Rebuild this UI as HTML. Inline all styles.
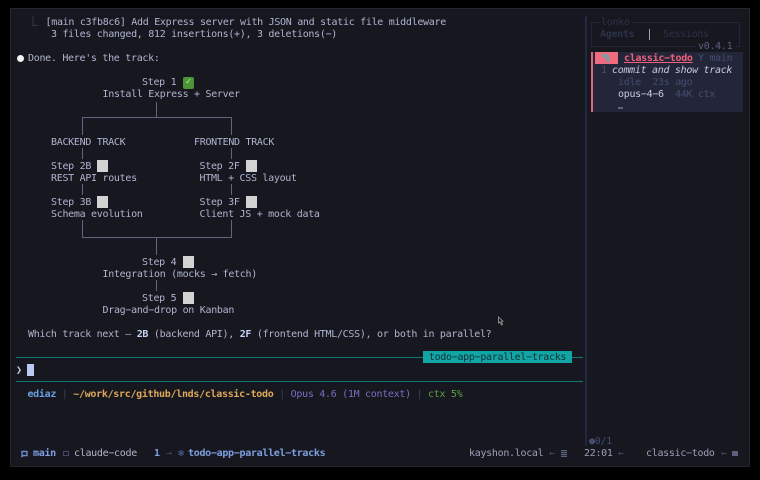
<!DOCTYPE html>
<html><head><meta charset="utf-8">
<style>
html,body{margin:0;padding:0;background:#000;}
body{width:760px;height:480px;overflow:hidden;position:relative;font-family:"DejaVu Sans Mono","Liberation Mono",monospace;font-size:10px;letter-spacing:-0.3px;line-height:12px;color:#aeb5d0;}
#all{position:absolute;left:0;top:0;width:760px;height:480px;filter:blur(0.3px);}
#win{position:absolute;left:11px;top:9px;width:738px;height:457px;background:#16171f;box-shadow:0 0 0 1px #25262d;}
.t{position:absolute;white-space:pre;height:12px;margin-top:1px;}
.b{position:absolute;background:#5f6580;}
.sq{position:absolute;width:11px;height:11.5px;background:#d2d2d2;}
b{color:#c5d0f5;font-weight:bold}
.d{color:#2d3348}
.m{color:#444d70}
</style></head><body>
<div id="all">
<div id="win"></div>

<div class="t" style="left:28px;top:16px;color:#5f6580">⎿</div>
<div class="t" style="left:45.5px;top:16px">[main c3fb8c6] Add Express server with JSON and static file middleware</div>
<div class="t" style="left:51px;top:28px">3 files changed, 812 insertions(+), 3 deletions(−)</div>
<div style="position:absolute;left:16.5px;top:54.5px;width:7px;height:7px;border-radius:50%;background:#f2f2f2"></div>
<div class="t" style="left:28px;top:52px">Done. Here's the track:</div>

<div class="t" style="left:142px;top:76px">Step 1</div>
<div style="position:absolute;left:182.5px;top:77px;width:11.5px;height:11.5px;border-radius:2px;background:#4a9636;color:#cfeebb;font-size:9px;line-height:11.5px;text-align:center">✓</div>
<div class="t" style="left:102.5px;top:88px">Install Express + Server</div>
<div class="t" style="left:51px;top:136px">BACKEND TRACK</div>
<div class="t" style="left:194px;top:136px">FRONTEND TRACK</div>
<div class="t" style="left:51px;top:160px">Step 2B</div><div class="sq" style="left:96.5px;top:160px"></div>
<div class="t" style="left:199.5px;top:160px">Step 2F</div><div class="sq" style="left:245.5px;top:160px"></div>
<div class="t" style="left:51px;top:172px">REST API routes</div>
<div class="t" style="left:199.5px;top:172px">HTML + CSS layout</div>
<div class="t" style="left:51px;top:196px">Step 3B</div><div class="sq" style="left:96.5px;top:196px"></div>
<div class="t" style="left:199.5px;top:196px">Step 3F</div><div class="sq" style="left:245.5px;top:196px"></div>
<div class="t" style="left:51px;top:208px">Schema evolution</div>
<div class="t" style="left:199.5px;top:208px">Client JS + mock data</div>
<div class="t" style="left:142px;top:256px">Step 4</div><div class="sq" style="left:182.5px;top:256px"></div>
<div class="t" style="left:102.5px;top:268px">Integration (mocks → fetch)</div>
<div class="t" style="left:142px;top:292px">Step 5</div><div class="sq" style="left:182.5px;top:292px"></div>
<div class="t" style="left:102.5px;top:304px">Drag−and−drop on Kanban</div>
<div class="t" style="left:28px;top:328px">Which track next — <b>2B</b> (backend API), <b>2F</b> (frontend HTML/CSS), or both in parallel?</div>

<!-- tree lines -->
<div class="b" style="left:156px;top:102px;width:1px;height:15px"></div>
<div class="b" style="left:81.5px;top:117px;width:150px;height:1px"></div>
<div class="b" style="left:81.5px;top:117px;width:1px;height:18px"></div>
<div class="b" style="left:231px;top:117px;width:1px;height:18px"></div>
<div class="b" style="left:81.5px;top:148px;width:1px;height:11px"></div>
<div class="b" style="left:231px;top:148px;width:1px;height:11px"></div>
<div class="b" style="left:81.5px;top:184px;width:1px;height:11px"></div>
<div class="b" style="left:231px;top:184px;width:1px;height:11px"></div>
<div class="b" style="left:81.5px;top:220px;width:1px;height:18px"></div>
<div class="b" style="left:231px;top:220px;width:1px;height:18px"></div>
<div class="b" style="left:81.5px;top:237px;width:150px;height:1px"></div>
<div class="b" style="left:156px;top:238px;width:1px;height:17px"></div>
<div class="b" style="left:156px;top:280px;width:1px;height:11px"></div>

<!-- mouse cursor -->
<svg style="position:absolute;left:497px;top:316px" width="8" height="11" viewBox="0 0 8 11"><path d="M1.5 1 L1.5 7 L3 6 L4.5 9 L5.5 8.5 L4.2 5.6 L6 5.2 Z" fill="#16171f" stroke="#a0a0a0" stroke-width=".8"/></svg>

<!-- rules and input -->
<div style="position:absolute;left:16px;top:356.5px;width:567px;height:1.5px;background:#0f7a74"></div>
<div style="position:absolute;left:423px;top:351px;width:149px;height:12px;background:#11a5a5;color:#123034;text-align:center;line-height:13px">todo−app−parallel−tracks</div>
<div class="t" style="left:16px;top:364px;color:#c5cce5;font-weight:bold">❯</div>
<div style="position:absolute;left:27px;top:364px;width:6.5px;height:11.5px;background:#b8c9f2"></div>
<div style="position:absolute;left:16px;top:380.5px;width:567px;height:1.5px;background:#0f7a74"></div>
<div class="t" style="left:16px;top:388px"><span style="color:#6b9fe0;font-weight:bold">  ediaz</span> <span style="color:#3b4058">|</span> <span style="color:#e0a85a;font-weight:bold">~/work/src/github/lnds/classic-todo</span> <span style="color:#3b4058">|</span> <span style="color:#7a6fc0">Opus 4.6 (1M context)</span> <span style="color:#3b4058">|</span> <span style="color:#5f9f4a">ctx 5%</span></div>

<!-- sidebar -->
<div style="position:absolute;left:585px;top:16px;width:1.5px;height:430px;background:#1f2a42"></div>
<div style="position:absolute;left:591px;top:22px;width:149px;height:25px;border:1px solid #232735;box-sizing:border-box"></div>
<div class="t d" style="left:601px;top:16px;background:#16171f;padding:0 3px 0 0">lonko</div>
<div class="t d" style="left:600px;top:28px;font-weight:bold">Agents</div>
<div style="position:absolute;left:648.5px;top:29px;width:1px;height:11px;background:#9aa0b8"></div>
<div class="t d" style="left:663px;top:28px">Sessions</div>
<div class="t" style="left:695px;top:40px;color:#5a6080;background:#16171f;padding:0 4px 0 3px">v0.4.1</div>
<div style="position:absolute;left:591px;top:52px;width:152px;height:60px;background:#222638"></div>
<div style="position:absolute;left:591px;top:52px;width:1.5px;height:60px;background:#e0667a"></div>
<div style="position:absolute;left:594.5px;top:52px;width:23px;height:12px;background:#ef6b7f"></div>
<svg style="position:absolute;left:601px;top:52px" width="12" height="12" viewBox="0 0 12 12"><path d="M1 2h5l2 2 1 3-1 3H6L5 7 3 5H1z" fill="#7f9aa0"/></svg>
<div class="t" style="left:624px;top:52px;color:#f0607a;font-weight:bold;text-decoration:underline">classic−todo</div>
<div class="t m" style="left:698px;top:52px">Y main</div>
<div class="t m" style="left:601px;top:64px">1</div>
<div class="t" style="left:612px;top:64px;font-style:italic;color:#c5cbe0">commit and show track</div>
<div class="t m" style="left:618px;top:76px">idle  23s ago</div>
<div class="t" style="left:618px;top:88px;color:#c5cbe0">opus−4−6</div>
<div class="t m" style="left:675px;top:88px">44K ctx</div>
<div style="position:absolute;left:618px;top:107px;width:5px;height:2px;background:#5a6080"></div>
<div class="t m" style="left:589px;top:435px">●0/1</div>

<!-- bottom bar -->
<svg style="position:absolute;left:21px;top:450px" width="7" height="8" viewBox="0 0 7 8"><path d="M1 1.5h5v4H2.5L1 6.5z" fill="none" stroke="#6a8cc8" stroke-width="1.4"/></svg>
<div class="t" style="left:33px;top:447px;color:#7f9fe0;font-weight:bold">main</div>
<div style="position:absolute;left:63px;top:451px;width:4px;height:3px;border:1px solid #3f4868"></div>
<div class="t" style="left:74px;top:447px;color:#b0b5c8">claude−code</div>
<div class="t" style="left:154px;top:447px;color:#7f9fe0;font-weight:bold">1</div>
<div class="t m" style="left:166px;top:447px">→</div>
<div class="t" style="left:178px;top:447px;color:#4f68a8">✻</div>
<div class="t" style="left:188px;top:447px;color:#7f9fe0;font-weight:bold">todo−app−parallel−tracks</div>
<div class="t" style="left:469px;top:447px;color:#9aa0b8">kayshon.local</div>
<div class="t m" style="left:549px;top:447px">←</div>
<div style="position:absolute;left:560.5px;top:450px;width:6px;height:7px;background:repeating-linear-gradient(#5a6080 0 1px,#2a2d3d 1px 2px)"></div>
<div class="t" style="left:584px;top:447px;color:#9aa0b8">22:01</div>
<div class="t m" style="left:618px;top:447px">←</div>
<div class="t" style="left:646px;top:447px;color:#9aa0b8">classic−todo</div>
<div class="t m" style="left:721px;top:447px">←</div>
<div style="position:absolute;left:732px;top:451px;width:6px;height:5px;background:#5a6080"></div>
</div>
</body></html>
